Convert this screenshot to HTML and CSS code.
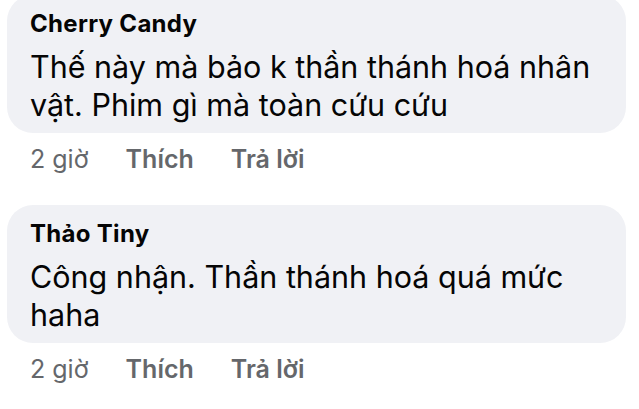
FILE: index.html
```html
<!DOCTYPE html>
<html lang="vi">
<head>
<meta charset="utf-8">
<title>Bình luận</title>
<link rel="stylesheet" href="styles.css">
</head>
<body>
<div class="thread">
  <div class="comment">
    <div class="bubble">
      <div class="name">Cherry Candy</div>
      <div class="text">Thế này mà bảo k thần thánh hoá nhân vật. Phim gì mà toàn cứu cứu</div>
    </div>
    <div class="meta">
      <span class="time">2 giờ</span>
      <span class="action">Thích</span>
      <span class="action">Trả lời</span>
    </div>
  </div>
  <div class="comment">
    <div class="bubble">
      <div class="name">Thảo Tiny</div>
      <div class="text">Công nhận. Thần thánh hoá quá mức haha</div>
    </div>
    <div class="meta">
      <span class="time">2 giờ</span>
      <span class="action">Thích</span>
      <span class="action">Trả lời</span>
    </div>
  </div>
</div>
</body>
</html>
```
FILE: styles.css
```css
html, body {
  margin: 0;
  padding: 0;
  background: #ffffff;
}
body {
  font-family: Inter, "Noto Sans", "Liberation Sans", sans-serif;
  color: #050505;
  overflow: hidden;
}
.thread {
  display: flex;
  flex-direction: column;
  gap: 31px;
  padding-left: 7px;
  margin-top: -5px;
}
.comment {
  display: flex;
  flex-direction: column;
  align-items: flex-start;
}
.bubble {
  background: #f0f1f5;
  border-radius: 26px;
  padding: 15px 26px 9px 23px;
  max-width: 570px;
}
.name {
  font-size: 24px;
  line-height: 28px;
  font-weight: 700;
  letter-spacing: 0.3px;
  margin-bottom: 10px;
}
.text {
  font-size: 30.5px;
  line-height: 38px;
  font-weight: 400;
}
.meta {
  display: flex;
  gap: 37px;
  margin-top: 11px;
  padding-left: 23px;
  font-size: 25px;
  line-height: 30px;
  color: #65676b;
}
.action {
  font-weight: 600;
}
```
